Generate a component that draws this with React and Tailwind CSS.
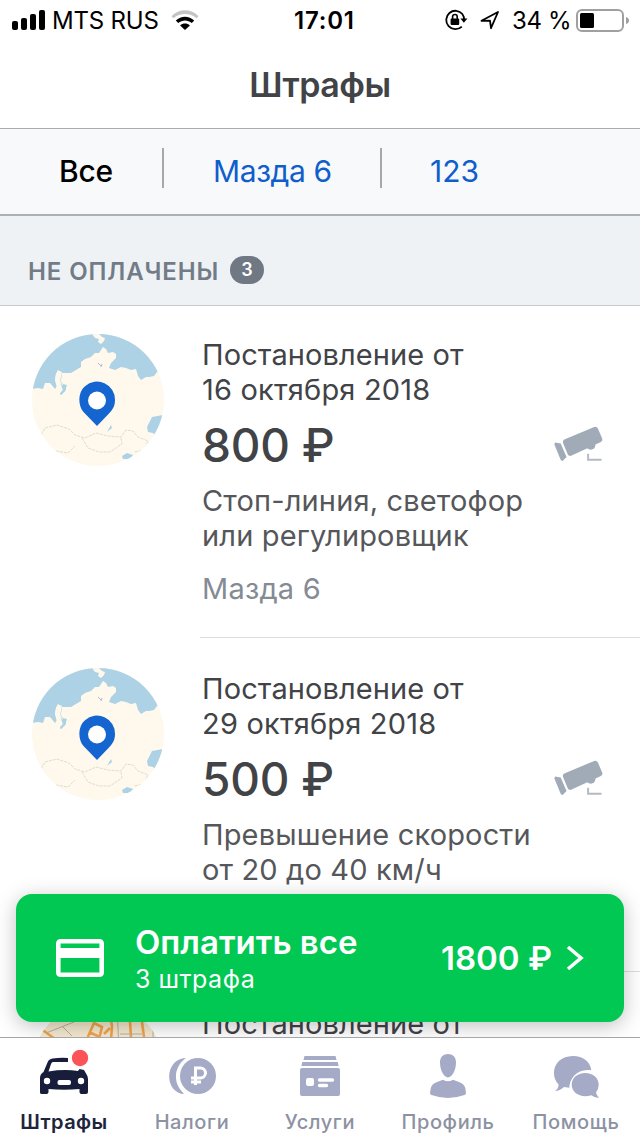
import React from "react";

const fines = [
  {
    date: "16 октября 2018",
    sum: "800 ₽",
    lines: ["Стоп-линия, светофор", "или регулировщик"],
    car: "Мазда 6",
  },
  {
    date: "29 октября 2018",
    sum: "500 ₽",
    lines: ["Превышение скорости", "от 20 до 40 км/ч"],
  },
];

function StatusBar() {
  return (
    <div className="flex h-10 shrink-0 items-center text-black">
      <svg className="ml-3 h-5 w-[34px] shrink-0" viewBox="0 0 34 20">
        <rect x="0" y="11" width="6" height="9" rx="2" />
        <rect x="9" y="8" width="6" height="12" rx="2" />
        <rect x="18" y="4" width="6" height="16" rx="2" />
        <rect x="27" y="0" width="6" height="20" rx="2" />
      </svg>
      <span className="ml-[6px] mt-px w-[110px] whitespace-nowrap text-[24px] leading-10 tracking-[-0.2px]">MTS RUS</span>
      <svg className="ml-[9px] h-5 w-[28px] shrink-0" viewBox="0 0 28 20">
        <path d="M0.5 6.2C8-1.6 20-1.6 27.5 6.2L25.5 8.2C19 2.6 9 2.6 2.5 8.2Z" fill="#c4c4c4" />
        <path d="M4.8 10.6C10 5.4 18 5.4 23.2 10.6L20.8 13C16.8 9.6 11.2 9.6 7.2 13Z" />
        <path d="M9.1 15.4C12 12.8 16 12.8 18.9 15.4L14 20Z" />
      </svg>
      <span className="ml-[95px] mt-[2px] w-[62px] whitespace-nowrap text-[24px] font-semibold leading-10 tracking-[0.8px]">17:01</span>
      <svg className="ml-[88px] h-[22px] w-[24px] shrink-0" viewBox="0 0 24 22">
        <path d="M18.6 5.2A9.2 9.2 0 1 0 17.8 17.6M18.2 4.7A9.2 9.2 0 0 1 20 11" fill="none" stroke="#000" strokeWidth="1.8" />
        <path d="M16.4 9.4H23.4L19.9 13.8Z" />
        <rect x="6.6" y="9.5" width="8.6" height="6.6" rx="1" />
        <path d="M8.6 10V7.8A2.3 2.3 0 0 1 13.2 7.8V10" fill="none" stroke="#000" strokeWidth="1.6" />
      </svg>
      <svg className="ml-[12px] h-5 w-5 shrink-0" viewBox="0 0 20 20">
        <path d="M1.5 10.8L18 2L11 18.2L10 10.6Z" fill="none" stroke="#000" strokeWidth="1.8" strokeLinejoin="round" />
      </svg>
      <span className="ml-[12px] mt-[2px] w-[58px] whitespace-nowrap text-[24px] leading-10 tracking-[-0.4px]">34 %</span>
      <svg className="ml-[6px] h-6 w-[54px] shrink-0" viewBox="0 0 54 24">
        <rect x="1" y="2" width="46" height="21" rx="5" fill="none" stroke="#a0a0a0" strokeWidth="2" />
        <rect x="4" y="5" width="14" height="15" rx="1.5" />
        <path d="M50 9Q53 10 53 12.5Q53 15 50 16Z" fill="#a0a0a0" />
      </svg>
    </div>
  );
}

function WorldMap() {
  return (
    <svg className="mt-px h-[132px] w-[132px] shrink-0" viewBox="0 0 132 132">
      <defs>
        <clipPath id="disc"><circle cx="66" cy="66" r="66" /></clipPath>
      </defs>
      <g clipPath="url(#disc)">
        <rect width="132" height="132" fill="#fef9ec" />
        <path d="M0 55L6 54L11 55L13 49L18 49L23 55L25 52L23 46L24 40L26 36L29 38L28 46L31 50L35 51L33 57L29 61L28 60L31 56L30 53L27 50L29 46L30 39L35 39L39 39L49 33L49 28L53 25L59 23L63 19L67 19L71 13L74 15L76 19L81 18L84 20L84 24L79 29L77 34L83 36L89 33L94 34L99 36L104 35L106 42L109 46L114 43L117 43L122 42L125 38L132 35V-4H0Z" fill="#add2e5" />
        <path d="M26 37L30 38L28 47L31 51L29 53L25 54L23 46L24 40Z" fill="#fef9ec" />
        <path d="M28 49L31 52L33 51L34 56L29 61L28 59L31 56L30 53Z" fill="#add2e5" />
        <path d="M55 1L60 0L63 4L67 5L66 8L69 10L72 7L73 4L70 3L68 1L66 -1H54Z" fill="#fef9ec" />
        <path d="M115 93L120 83L131 81L132 94L126 104L121 99L116 98Z M90 122L95 119L101 121L98 125H91Z M75 98L79 91L80 94Z" fill="#add2e5" />
        <path d="M66 29L69 32M70 30L69 33" stroke="#b5b5da" strokeWidth="1" fill="none" />
        <path d="M9 101L13 94L25 91L37 95L43 101L53 104L64 99L76 102L89 103L94 96L101 97L106 103L116 107L112 116L102 118M50 104L56 114L67 118H78L90 110L89 104M24 117L36 119L43 112" fill="none" stroke="#d2cdc3" strokeWidth="0.7" strokeDasharray="3 1" />
      </g>
      <path d="M65 92L51.5 78C46 72 45.5 58 53 52.2A18 18 0 0 1 83 66C83 73 80 76 77 79.5Z" fill="#1565d0" />
      <circle cx="65" cy="66.5" r="9" fill="#fff" />
    </svg>
  );
}

function CityMap() {
  return (
    <svg className="mt-px h-[132px] w-[132px] shrink-0" viewBox="0 0 132 132">
      <defs>
        <clipPath id="city"><circle cx="66" cy="66" r="66" /></clipPath>
      </defs>
      <g clipPath="url(#city)">
        <rect width="132" height="132" fill="#f5e9cf" />
        <path d="M5 24L30 42M55 37L62 21L70 25L67 37M57 30L72 37M77 0L80 25L78 50M98 20L100 50M110 20L114 50M72 32L78 26" fill="none" stroke="#f2a54c" strokeWidth="2.6" />
        <path d="M14 31L42 20M30 24L40 34M85 0L87 50M88 32H110M121 20V50" fill="none" stroke="#b7b0a2" strokeWidth="1" />
      </g>
    </svg>
  );
}

function Camera() {
  return (
    <svg className="mt-[93px] mr-[37px] ml-auto h-[36px] w-[49px] shrink-0" viewBox="0 0 50 36">
      <path d="M10.5 13.5L41 0.6Q43.5 -0.2 44.6 2L49.2 12.5Q50 14.8 47.8 16L18 29.8Q15.3 31 14 28.4L9.2 17Q8.4 14.6 10.5 13.5Z" fill="#a1aab7" />
      <circle cx="37.5" cy="19" r="4.8" fill="#a1aab7" />
      <path d="M1 16.5L6.8 17.6L12.8 31.2L8.8 35.4L7 34.6L0.4 18.4Z" fill="#a1aab7" />
      <path d="M34.8 28V34H48.5" fill="none" stroke="#b4bac3" strokeWidth="2" />
    </svg>
  );
}

function Fine({ fine, first }) {
  return (
    <div className={first ? "flex h-[332px] shrink-0 pt-[27px] pl-8" : "flex h-[334px] shrink-0 pt-[29px] pl-8"}>
      <WorldMap />
      <div className="ml-9 flex flex-1 border-b border-[#dcdde0]">
        <div className="mt-1 ml-[2px] whitespace-nowrap text-[29px] leading-[35px] text-[#55575b]">
          <div className="text-[#414347]">
            <div className="tracking-[0.1px]">Постановление от</div>
            <div className="tracking-[0.2px]">{fine.date}</div>
          </div>
          <div className="mt-[10px] text-[46px] font-medium leading-[56px] tracking-[-0.2px] text-[#414347]">{fine.sum}</div>
          <div className="mt-[10px] tracking-[0.15px]">
            {fine.lines.map((l) => <div key={l}>{l}</div>)}
          </div>
          {fine.car && <div className="mt-[18px] tracking-[0.2px] text-[#858b94]">{fine.car}</div>}
        </div>
        <Camera />
      </div>
    </div>
  );
}

function CarIcon() {
  return (
    <svg className="h-12 w-[52px]" viewBox="0 0 52 48">
      <path d="M2 42.5V28Q2 24 5.5 22L9.5 12.5Q11 9 14.5 8.6Q23 7.2 30 8V12H15Q13.7 12 13 14L10.5 21.5Q26 19 40 21L41.5 19L46 20L48.3 24Q50 26 50 29V42Q50 44 48 44H43.5Q41.5 44 41.5 42V39Q26 40.5 10.5 39V42Q10.5 44 8.5 44H4Q2 44 2 42.5Z" fill="#171d3b" />
      <circle cx="9" cy="31" r="3.2" fill="#fff" />
      <circle cx="43" cy="31" r="3.2" fill="#fff" />
      <rect x="19.5" y="30" width="13.5" height="5" rx="2" fill="#fff" />
      <circle cx="42" cy="8" r="8.2" fill="#fb5458" />
    </svg>
  );
}

function TaxIcon() {
  return (
    <svg className="h-12 w-[52px]" viewBox="0 0 52 48">
      <path d="M20 8C-1 10 -1 42 18 44C4.5 36 4.5 16 20 8Z" fill="#a5aac6" />
      <path d="M19.5 8.3C-2 9 -2 43 18 43.7C7 34 7 18 19.5 8.3Z" fill="#a5aac6" />
      <circle cx="32" cy="26" r="18" fill="#a5aac6" />
      <path d="M29.5 35V18H34.5A5 5 0 0 1 34.5 28H25M25 32H35" fill="none" stroke="#fff" strokeWidth="3" />
    </svg>
  );
}

function ServicesIcon() {
  return (
    <svg className="h-12 w-[52px]" viewBox="0 0 52 48">
      <path d="M10.5 6H41.5L42.5 10H9.5Z M8.2 12H43.8L44.6 16H7.4Z" fill="#a5aac6" />
      <rect x="6" y="18" width="40" height="28" rx="2" fill="#a5aac6" />
      <rect x="12" y="28" width="8" height="8" rx="2" fill="#fff" />
      <path d="M25.5 30H38.5M25.5 35.5H32.5" stroke="#fff" strokeWidth="3.4" strokeLinecap="round" />
    </svg>
  );
}

function ProfileIcon() {
  return (
    <svg className="h-12 w-[52px]" viewBox="0 0 52 48">
      <path d="M26 4C31.5 4 34.2 7.8 34 13C33.8 20 30.5 27 26 27.4C21.5 27 18.2 20 18 13C17.8 7.8 20.5 4 26 4Z" fill="#a5aac6" />
      <path d="M21 29.8Q26 32.8 31 29.8L37.5 32.3Q42 34 43.3 38L44 43Q44 44.5 42.5 45Q34 48 26 48Q18 48 9.5 45Q8 44.5 8 43L8.8 38Q10 34 14.5 32.3Z" fill="#a5aac6" />
    </svg>
  );
}

function HelpIcon() {
  return (
    <svg className="h-12 w-[52px]" viewBox="0 0 52 48">
      <path d="M23 6C33 6 40.5 12 41.3 20.2C28 18 19.5 27.5 19.3 37.7L14 37Q9.5 41 5 41Q8.5 38.5 8.6 34.5C-0.5 25.5 3.5 6 23 6Z" fill="#a5aac6" />
      <path d="M35.3 23C43 23 48.7 28 48.7 34.8Q48.7 39 46 42.5Q46.5 45.5 49 48Q45 48 41.4 45.2C31 48.5 21.7 43 21.7 34.5C21.7 28 27.5 23 35.3 23Z" fill="#a5aac6" />
    </svg>
  );
}

const tabs = [
  { label: "Штрафы", Icon: CarIcon, active: true },
  { label: "Налоги", Icon: TaxIcon },
  { label: "Услуги", Icon: ServicesIcon },
  { label: "Профиль", Icon: ProfileIcon },
  { label: "Помощь", Icon: HelpIcon },
];

export default function App() {
  return (
    <div className="relative flex h-[1136px] w-[640px] flex-col overflow-hidden bg-white font-['Inter','Liberation_Sans',sans-serif]">
      <StatusBar />
      <header className="flex h-[89px] shrink-0 items-center justify-center border-b border-[#a9abad] pt-px text-[34px] font-semibold leading-[40px] tracking-[-0.5px] text-[#414347]">
        <h1>Штрафы</h1>
      </header>
      <nav className="flex h-[87px] shrink-0 items-center border-b-2 border-[#aeb1b4] bg-[#f8f9fb] pb-[2px] text-[30px] leading-[36px]">
        <span className="w-[162px] pl-[59px] font-medium tracking-[-0.3px] text-black">Все</span>
        <span className="mb-[5px] h-10 w-[2px] bg-[#a6a8ac]" />
        <span className="w-[216px] pl-[49px] tracking-[-0.4px] text-[#105dcc]">Мазда 6</span>
        <span className="mb-[5px] h-10 w-[2px] bg-[#a6a8ac]" />
        <span className="pl-[48px] text-[#105dcc]">123</span>
      </nav>
      <div className="flex h-[90px] shrink-0 items-start border-b border-[#c7cacd] bg-[#eff2f5] pt-[40px] pl-7">
        <span className="mt-px w-[202px] whitespace-nowrap text-[24px] font-semibold leading-[30px] tracking-[0.9px] text-[#727c88]">НЕ ОПЛАЧЕНЫ</span>
        <span className="flex h-7 w-[34px] items-center justify-center rounded-full bg-[#6f7883] text-[18px] font-semibold leading-7 text-white">3</span>
      </div>
      <main className="flex min-h-0 flex-1 flex-col overflow-hidden">
        <Fine fine={fines[0]} first />
        <Fine fine={fines[1]} />
        <div className="flex shrink-0 pt-[29px] pl-8">
          <CityMap />
          <div className="mt-[5px] ml-[38px] whitespace-nowrap text-[29px] leading-[35px] tracking-[0.1px] text-[#414347]">Постановление от</div>
        </div>
      </main>
      <button className="absolute top-[894px] left-4 flex h-32 w-[608px] items-center rounded-2xl bg-[#00c853] text-left text-white shadow-[0_4px_20px_rgba(0,0,0,0.25)]">
        <svg className="ml-10 h-[38px] w-12 shrink-0" viewBox="0 0 48 38">
          <rect x="2.3" y="2.3" width="43.4" height="33.4" rx="2" fill="none" stroke="#fff" strokeWidth="4.6" />
          <path d="M3 14H45" stroke="#fff" strokeWidth="10" />
        </svg>
        <div className="mt-[3px] ml-[31px] w-[300px] whitespace-nowrap">
          <div className="text-[33px] font-semibold leading-[38px]">Оплатить все</div>
          <div className="text-[25px] leading-[36px] tracking-[0.5px]">3 штрафа</div>
        </div>
        <div className="ml-[6px] w-[113px] whitespace-nowrap text-[33px] font-semibold leading-[40px]">1800 ₽</div>
        <svg className="ml-[12px] h-[26px] w-[18px] shrink-0" viewBox="0 0 18 26">
          <path d="M2 2L15 13L2 24" fill="none" stroke="#fff" strokeWidth="3.6" />
        </svg>
      </button>
      <footer className="z-10 grid h-[99px] shrink-0 grid-cols-5 border-t border-[#a4a6aa] bg-white">
        {tabs.map(({ label, Icon, active }) => (
          <div key={label} className="flex flex-col items-center pt-3">
            <Icon />
            <span className={active ? "mt-[11px] text-[20px] font-semibold leading-[26px] tracking-[0.4px] text-[#20243b]" : "mt-[11px] text-[20px] font-medium leading-[26px] tracking-[0.6px] text-[#8d92a3]"}>{label}</span>
          </div>
        ))}
      </footer>
    </div>
  );
}
